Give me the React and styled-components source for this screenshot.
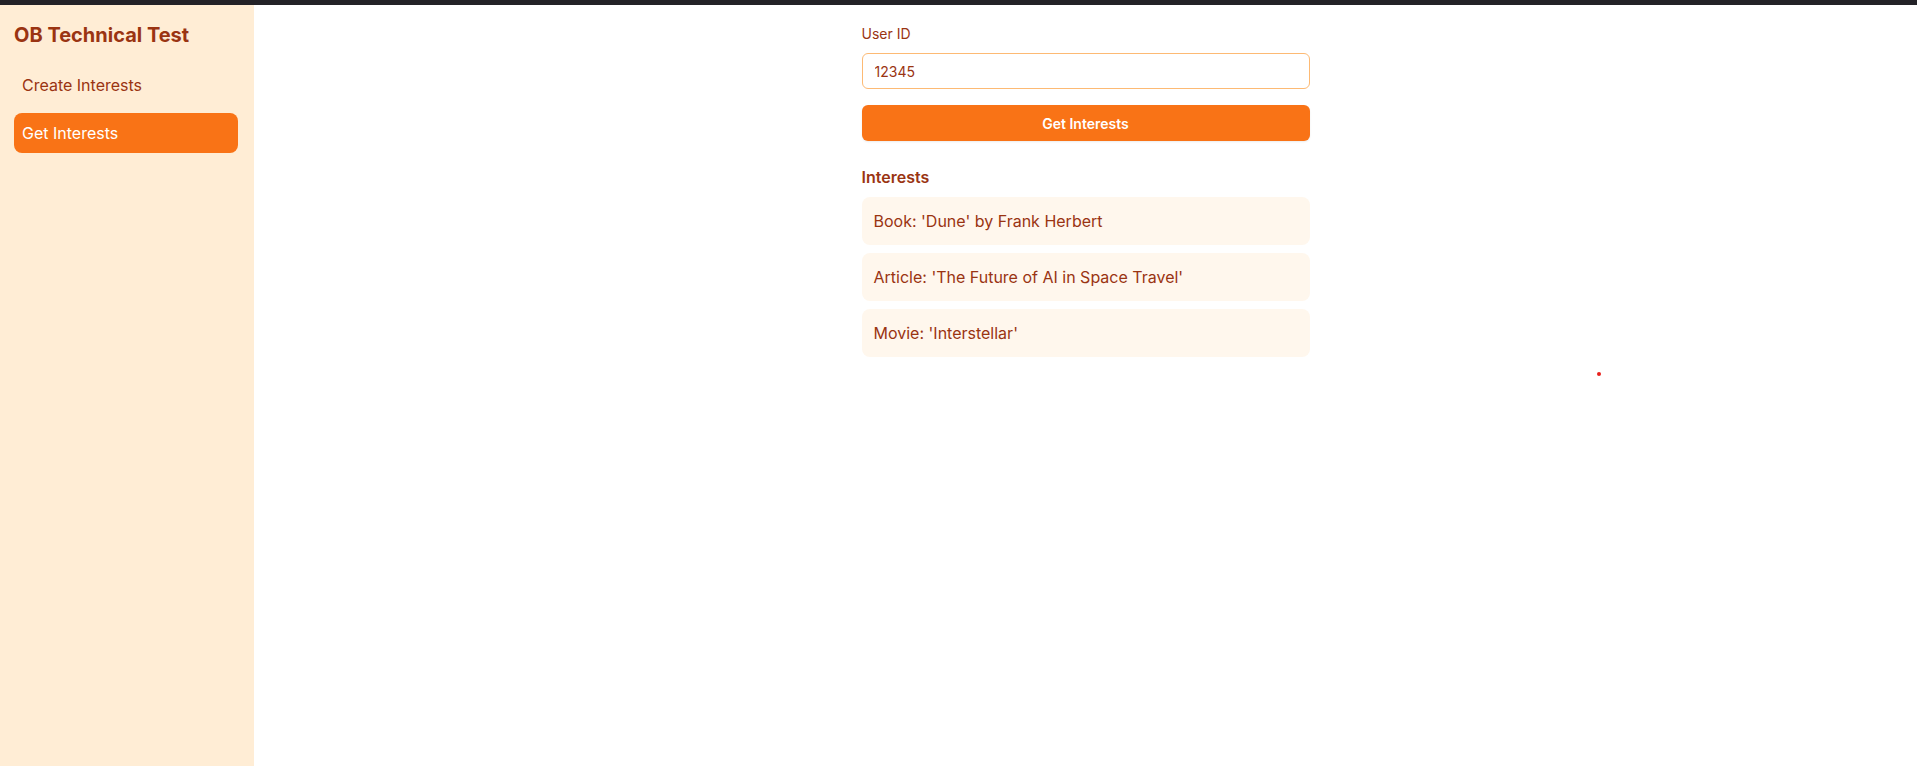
import React from 'react';
import styled, { createGlobalStyle } from 'styled-components';

const GlobalStyle = createGlobalStyle`
  html, body {
    margin: 0;
    padding: 0;
    height: 100%;
  }
  body {
    font-family: Inter, 'Noto Sans', sans-serif;
    color: #9a3412;
    background: #ffffff;
  }
  #root {
    height: 100%;
  }
  * {
    box-sizing: border-box;
  }
`;

const Page = styled.div`
  display: flex;
  flex-direction: column;
  height: 100vh;
  position: relative;
`;

const TopBar = styled.div`
  height: 5px;
  flex-shrink: 0;
  background-color: #232227;
`;

const Layout = styled.div`
  flex: 1;
  display: flex;
  min-height: 0;
`;

const Sidebar = styled.aside`
  width: 254px;
  flex-shrink: 0;
  background-color: #ffedd5;
  padding: 16px 16px 0 14px;
  display: flex;
  flex-direction: column;
`;

const Title = styled.h1`
  margin: 0 0 16px;
  font-size: 20px;
  line-height: 28px;
  font-weight: 700;
  color: #9a3412;
`;

const NavList = styled.nav`
  display: flex;
  flex-direction: column;
  gap: 8px;
`;

const NavItem = styled.div`
  height: 40px;
  display: flex;
  align-items: center;
  padding: 0 8px;
  border-radius: 8px;
  font-size: 16px;
  color: ${({ active }) => (active ? '#ffffff' : '#9a3412')};
  background-color: ${({ active }) => (active ? '#f97316' : 'transparent')};
`;

const Main = styled.main`
  flex: 1;
  display: flex;
  justify-content: center;
  padding-top: 19px;
`;

const Column = styled.div`
  width: 448px;
  display: flex;
  flex-direction: column;
`;

const Label = styled.label`
  font-size: 14px;
  line-height: 20px;
  color: #9a3412;
  margin-bottom: 9px;
`;

const Input = styled.input`
  height: 36px;
  width: 100%;
  border: 1px solid #fdba74;
  border-radius: 6px;
  padding: 0 12px;
  font-family: inherit;
  font-size: 14px;
  color: #9a3412;
  outline: none;
  background: #ffffff;
`;

const Button = styled.button`
  margin-top: 16px;
  height: 36px;
  width: 100%;
  border: none;
  border-radius: 6px;
  background-color: #f97316;
  color: #ffffff;
  font-family: inherit;
  font-size: 14px;
  font-weight: 600;
  box-shadow: 0 1px 2px rgba(0, 0, 0, 0.08);
  cursor: pointer;
`;

const SectionTitle = styled.h2`
  margin: 24px 0 8px;
  font-size: 16px;
  line-height: 24px;
  font-weight: 600;
  color: #9a3412;
`;

const List = styled.ul`
  list-style: none;
  margin: 0;
  padding: 0;
  display: flex;
  flex-direction: column;
  gap: 8px;
`;

const ListItem = styled.li`
  padding: 12px;
  line-height: 24px;
  font-size: 16px;
  border-radius: 8px;
  background-color: #fff7ed;
  color: #9a3412;
`;

const Dot = styled.span`
  position: absolute;
  left: 1597px;
  top: 372px;
  width: 4px;
  height: 4px;
  border-radius: 50%;
  background-color: #e8201c;
`;

const interests = [
  "Book: 'Dune' by Frank Herbert",
  "Article: 'The Future of AI in Space Travel'",
  "Movie: 'Interstellar'",
];

export default function App() {
  return (
    <Page>
      <GlobalStyle />
      <TopBar />
      <Layout>
        <Sidebar>
          <Title>OB Technical Test</Title>
          <NavList>
            <NavItem>Create Interests</NavItem>
            <NavItem active>Get Interests</NavItem>
          </NavList>
        </Sidebar>
        <Main>
          <Column>
            <Label htmlFor="user-id">User ID</Label>
            <Input id="user-id" defaultValue="12345" />
            <Button>Get Interests</Button>
            <SectionTitle>Interests</SectionTitle>
            <List>
              {interests.map((item) => (
                <ListItem key={item}>{item}</ListItem>
              ))}
            </List>
          </Column>
        </Main>
      </Layout>
      <Dot />
    </Page>
  );
}
